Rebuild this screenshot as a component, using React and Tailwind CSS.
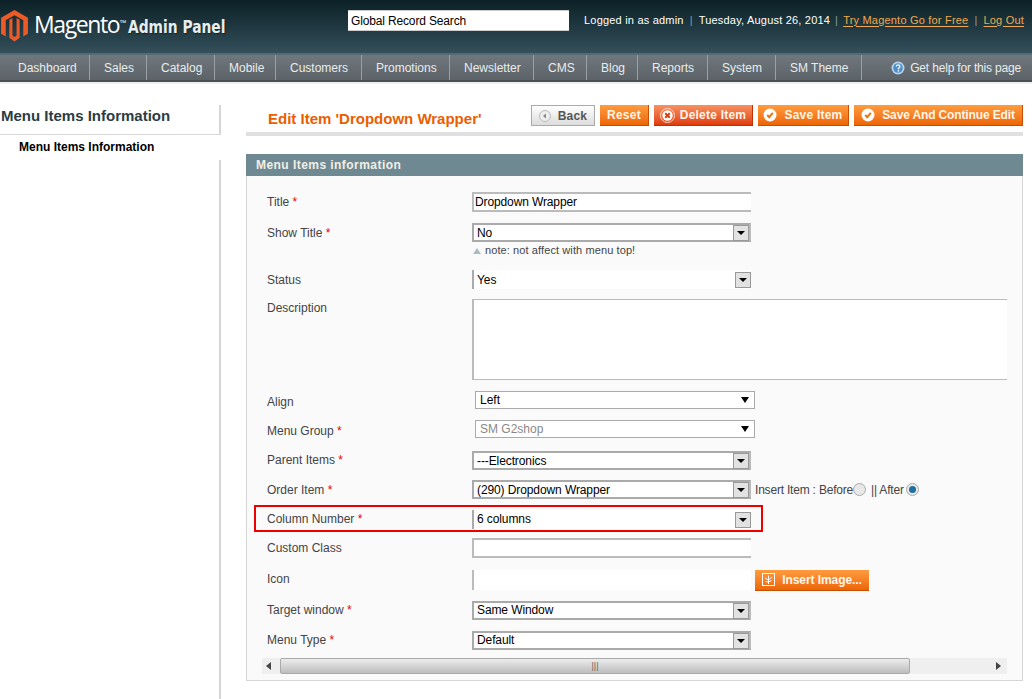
import React from "react";

const navItems = [
  { label: "Dashboard", width: "w-[90px] pl-[18px]" },
  { label: "Sales", width: "w-[57px] pl-[14px]" },
  { label: "Catalog", width: "w-[68px] pl-[14px]" },
  { label: "Mobile", width: "w-[61px] pl-[14px]" },
  { label: "Customers", width: "w-[86px] pl-[14px]" },
  { label: "Promotions", width: "w-[88px] pl-[14px]" },
  { label: "Newsletter", width: "w-[84px] pl-[14px]" },
  { label: "CMS", width: "w-[53px] pl-[14px]" },
  { label: "Blog", width: "w-[51px] pl-[14px]" },
  { label: "Reports", width: "w-[70px] pl-[14px]" },
  { label: "System", width: "w-[68px] pl-[14px]" },
  { label: "SM Theme", width: "w-[86px] pl-[14px]" },
];

const Logo = () => (
  <svg width="27" height="32" viewBox="0 0 26 31" className="shrink-0">
    <path d="M13 0 L26 7.5 V23 L21.5 25.7 V10 L13 5 L4.5 10 V25.7 L0 23 V7.5 Z" fill="#ee5a26" />
    <path d="M8 9.5 L11 7.8 V25 L13 26.2 L15 25 V7.8 L18 9.5 V27 L13 30.5 L8 27 Z" fill="#ee5a26" />
  </svg>
);

const Req = () => <span className="text-[#eb0000]"> *</span>;

// select with the grey arrow box; bare ones have lost their top and bottom border
const Select = ({ value, bare, up }) => (
  <div className={`relative h-full w-[279px] bg-white border-l-2 border-[#aaa] pl-[3px] flex items-center tracking-[-0.1px] text-black ${bare ? "" : "border-y-2 border-r-2 border-r-[#bbb]"}`}>
    <span className={up ? "pb-[2px]" : ""}>{value}</span>
    <span className={`absolute right-0 flex h-[16px] w-[16px] items-center justify-center border border-[#999] bg-[#e2e2e2] ${bare ? "top-[2px]" : "top-0"}`}>
      <span className="border-x-[4px] border-t-[4px] border-x-transparent border-t-black" />
    </span>
  </div>
);

const PlainSelect = ({ value, muted }) => (
  <div className={`ml-[3px] flex h-full w-[280px] items-center justify-between border border-[#aaa] bg-white pl-[4px] pr-[5px] ${muted ? "text-[#888]" : "text-black"}`}>
    {value}
    <span className="border-x-[4px] border-t-[6px] border-x-transparent border-t-black" />
  </div>
);

const Row = ({ label, required, className, labelClass, children }) => (
  <div className={`flex items-center ${className}`}>
    <div className={`w-[205px] shrink-0 text-[#444] ${labelClass || ""}`}>
      {label}
      {required && <Req />}
    </div>
    {children}
  </div>
);

const OrangeButton = ({ children, className }) => (
  <button className={`flex h-[21px] items-center justify-center whitespace-nowrap border-r border-b border-[#c84f00] bg-gradient-to-b from-[#ff9c3c] to-[#ed6502] text-[12px] font-bold tracking-[0.22px] text-[#fff6ea] ${className}`}>
    {children}
  </button>
);

const CheckIcon = () => (
  <svg width="14" height="14" viewBox="0 0 14 14">
    <circle cx="7" cy="7" r="6.5" fill="#fff" />
    <path d="M4.2 7 L6.2 9.2 L9.8 4.8" fill="none" stroke="#e8760f" strokeWidth="2" />
  </svg>
);

const App = () => {
  return (
    <div className="h-[699px] w-[1032px] overflow-hidden bg-white font-['Liberation_Sans',Arial,sans-serif] text-[12px]">
      {/* Header */}
      <header className="flex h-[53px] bg-gradient-to-b from-[#0c2127] to-[#34505b]">
        <div className="mt-[10px] ml-[1px] flex h-[32px] w-[347px] shrink-0 items-start whitespace-nowrap">
          <Logo />
          <span className="ml-[6px] font-['Open_Sans',sans-serif] text-[23px] leading-[29px] tracking-[-1.4px] text-white">Magento</span>
          <span className="mt-[9px] text-[7px] leading-none text-white">™</span>
          <span className="ml-[2px] mt-[6px] origin-left scale-x-[0.854] font-['DejaVu_Sans_Condensed','DejaVu_Sans',sans-serif] text-[18px] font-bold leading-[22px] text-[#e8eeee] [text-shadow:1px_1px_1px_#10242a]">Admin Panel</span>
        </div>
        <input
          readOnly
          defaultValue="Global Record Search"
          className="mt-[10px] h-[21px] w-[221px] shrink-0 border-y border-y-[#ccc] bg-white pl-[3px] text-[12px] tracking-[-0.15px] text-black outline-none"
        />
        <div className="mt-[13px] ml-[15px] flex h-[14px] items-center whitespace-nowrap text-[11px] tracking-[0.2px] text-white">
          <span>Logged in as admin</span>
          <span className="mx-[6px] text-[#8b9ca2]">|</span>
          <span>Tuesday, August 26, 2014</span>
          <span className="mx-[5px] text-[#8b9ca2]">|</span>
          <span className="text-[#f0a94e] underline underline-offset-2">Try Magento Go for Free</span>
          <span className="mx-[6px] text-[#8b9ca2]">|</span>
          <span className="text-[#f0a94e] underline underline-offset-2">Log Out</span>
        </div>
      </header>

      {/* Nav */}
      <nav className="flex h-[29px] items-stretch border-t-2 border-t-[#536b75] border-b-2 border-b-[#4b5055] bg-gradient-to-b from-[#70787d] to-[#5c6368] text-[#e9eced]">
        {navItems.map((item) => (
          <div key={item.label} className={`flex items-center whitespace-nowrap border-r border-r-[#9aa1a5] ${item.width}`}>
            {item.label}
          </div>
        ))}
        <div className="ml-auto mr-[11px] flex items-center tracking-[-0.18px]">
          <svg width="14" height="14" viewBox="0 0 14 14" className="mr-[5px]">
            <circle cx="7" cy="7" r="6.5" fill="#b9d4ee" />
            <circle cx="7" cy="7" r="4.8" fill="#4f8fc9" />
            <path d="M5.3 5.6 A1.8 1.8 0 1 1 7.4 7.4 V8.2" fill="none" stroke="#fff" strokeWidth="1.3" />
            <rect x="6.7" y="9.2" width="1.4" height="1.4" fill="#fff" />
          </svg>
          Get help for this page
        </div>
      </nav>
      <div className="h-[2px] bg-[#efefef]" />

      {/* Content */}
      <div className="flex">
        <aside className="w-[221px] shrink-0 pt-[21px]">
          <div className="h-[30px] border-r-2 border-b border-[#d6d6d6] pl-[1px] pt-[1px] text-[15px] font-bold leading-[20px] text-[#2b3c45]">
            Menu Items Information
          </div>
          <div className="h-[25px] pl-[19px] pt-[4px] text-[12px] font-bold leading-[16px] text-black">Menu Items Information</div>
          <div className="h-[560px] border-r-2 border-[#d6d6d6]" />
        </aside>

        <main className="ml-[25px] w-[777px] shrink-0">
          <div className="flex h-[52px] items-start border-b-[4px] border-b-[#e0e0e0]">
            <h3 className="ml-[22px] mt-[26px] text-[15px] font-bold leading-[18px] text-[#eb5e00]">Edit Item 'Dropdown Wrapper'</h3>
            <div className="ml-auto mt-[21px] flex gap-[5px]">
              <button className="flex h-[21px] w-[64px] items-center justify-center gap-[7px] border border-[#aaa] bg-gradient-to-b from-white to-[#dcdcdc] font-bold tracking-[0.2px] text-[#555]">
                <svg width="12" height="12" viewBox="0 0 12 12">
                  <circle cx="6" cy="6" r="5.5" fill="#eee" stroke="#bbb" />
                  <path d="M7 3.5 V8.5 L4 6 Z" fill="#888" />
                </svg>
                Back
              </button>
              <OrangeButton className="w-[49px]">Reset</OrangeButton>
              <button className="flex h-[21px] w-[99px] items-center justify-center gap-[5px] border-r border-b border-[#c03000] bg-gradient-to-b from-[#f7915f] to-[#de3a06] font-bold tracking-[0.22px] text-[#fff6ea]">
                <svg width="15" height="15" viewBox="0 0 15 15">
                  <circle cx="7.5" cy="7.5" r="7" fill="none" stroke="#fbd8c8" />
                  <circle cx="7.5" cy="7.5" r="5.2" fill="#fff" />
                  <path d="M5.2 5.2 L9.8 9.8 M9.8 5.2 L5.2 9.8" stroke="#d8400f" strokeWidth="2" />
                </svg>
                Delete Item
              </button>
              <OrangeButton className="w-[91px] gap-[7px]">
                <CheckIcon />
                Save Item
              </OrangeButton>
              <OrangeButton className="w-[169px] gap-[7px]">
                <CheckIcon />
                <span className="tracking-[-0.14px]">Save And Continue Edit</span>
              </OrangeButton>
            </div>
          </div>

          {/* Form panel */}
          <div className="mt-[18px] flex h-[22px] items-center bg-[#6f8992] pl-[10px] font-bold tracking-[0.45px] text-[#f2efe6]">Menu Items information</div>
          <div className="h-[505px] border-x border-b border-[#d6d6d6] bg-[#fafafa]">
            <div className="w-[760px] overflow-hidden pl-[20px] pt-[16px]">
              <Row label="Title" required className="h-[20px]">
                <input readOnly defaultValue="Dropdown Wrapper" className="h-full w-[279px] border-y-2 border-l-2 border-[#bbb] bg-white pl-[1px] tracking-[-0.12px] text-black outline-none" />
              </Row>
              <Row label="Show Title" required className="mt-[11px] h-[19px]">
                <Select value="No" />
              </Row>
              <div className="ml-[205px] flex h-[16px] items-center pl-[1px] pt-[1px] text-[11px] tracking-[0.1px] text-[#444]">
                <span className="mr-[4px] border-x-[4px] border-b-[6px] border-x-transparent border-b-[#a9bcc2]" />
                note: not affect with menu top!
              </div>
              <Row label="Status" className="mt-[12px] h-[19px]">
                <Select value="Yes" bare />
              </Row>
              <div className="mt-[10px] flex h-[81px]">
                <div className="w-[205px] shrink-0 text-[#444]">Description</div>
                <div className="h-full w-[600px] shrink-0 border-y border-l-2 border-[#bbb] bg-white" />
              </div>
              <Row label="Align" labelClass="pt-[3px]" className="mt-[11px] h-[18px]">
                <PlainSelect value="Left" />
              </Row>
              <Row label="Menu Group" labelClass="pt-[3px]" required className="mt-[11px] h-[18px]">
                <PlainSelect value="SM G2shop" muted />
              </Row>
              <Row label="Parent Items" labelClass="pb-[2px]" required className="mt-[13px] h-[19px]">
                <Select value="---Electronics" />
              </Row>
              <Row label="Order Item" required className="mt-[10px] h-[19px]">
                <Select value="(290) Dropdown Wrapper" />
                <div className="ml-[4px] flex items-center whitespace-nowrap tracking-[-0.2px] text-[#444]">
                  Insert Item : Before
                  <span className="h-[13px] w-[13px] rounded-full border border-[#aaa] bg-[#e8e8e8]" />
                  <span className="ml-[5px]">|| After</span>
                  <span className="ml-[2px] flex h-[13px] w-[13px] items-center justify-center rounded-full border border-[#aaa] bg-[#e8e8e8]">
                    <span className="h-[7px] w-[7px] rounded-full bg-[#1f6f9f]" />
                  </span>
                </div>
              </Row>
              <Row label="Column Number" labelClass="pb-[2px]" required className="relative mt-[11px] h-[19px]">
                <Select value="6 columns" bare up />
                <div className="absolute -left-[13px] -top-[5px] h-[27px] w-[509px] border-2 border-[#ee0000]" />
              </Row>
              <Row label="Custom Class" className="mt-[9px] h-[20px]">
                <div className="h-full w-[279px] border-y-2 border-l-2 border-[#bbb] bg-white" />
              </Row>
              <Row label="Icon" labelClass="pb-[2px]" className="mt-[12px] h-[20px]">
                <div className="h-full w-[279px] border-l-2 border-[#bbb] bg-white" />
                <OrangeButton className="ml-[4px] w-[114px] gap-[7px] border-r-0">
                  <svg width="13" height="13" viewBox="0 0 13 13">
                    <rect x="0.5" y="0.5" width="12" height="12" fill="none" stroke="#fff" />
                    <path d="M6.5 2.5 V11 M3 5 L6.5 7 L10 4 M3.5 8.5 L6.5 9 L9.5 7.5" fill="none" stroke="#fff" />
                  </svg>
                  <span className="tracking-[-0.08px]">Insert Image...</span>
                </OrangeButton>
              </Row>
              <Row label="Target window" labelClass="pb-[2px]" required className="mt-[11px] h-[19px]">
                <Select value="Same Window" up />
              </Row>
              <Row label="Menu Type" labelClass="pb-[2px]" required className="mt-[11px] h-[19px]">
                <Select value="Default" up />
              </Row>
            </div>

            {/* Horizontal scrollbar */}
            <div className="ml-[15px] mt-[8px] flex h-[16px] w-[745px] items-center bg-[#efefef]">
              <span className="ml-[4px] border-y-[4px] border-r-[5px] border-y-transparent border-r-[#444]" />
              <div className="ml-[9px] flex h-full w-[630px] items-center justify-center rounded-[2px] border border-[#aaa] bg-gradient-to-b from-[#ececec] to-[#bdbdbd]">
                <span className="text-[9px] leading-none text-[#666]">|||</span>
              </div>
              <span className="ml-auto mr-[6px] border-y-[4px] border-l-[5px] border-y-transparent border-l-[#444]" />
            </div>
          </div>
        </main>
      </div>
    </div>
  );
};

export default App;
